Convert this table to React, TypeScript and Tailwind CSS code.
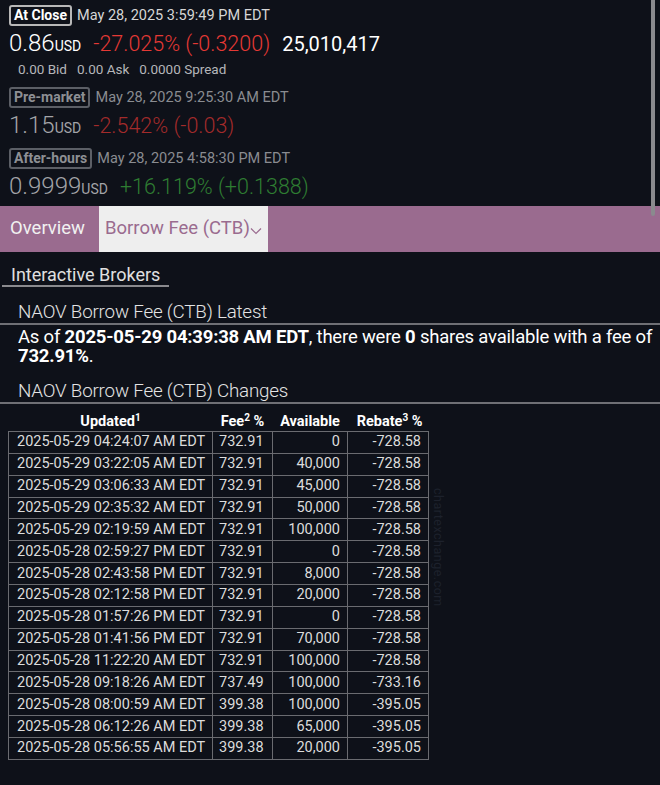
import React from "react";

type Row = [string, string, string, string];

const rows: Row[] = [
  ["2025-05-29 04:24:07 AM EDT", "732.91", "0", "-728.58"],
  ["2025-05-29 03:22:05 AM EDT", "732.91", "40,000", "-728.58"],
  ["2025-05-29 03:06:33 AM EDT", "732.91", "45,000", "-728.58"],
  ["2025-05-29 02:35:32 AM EDT", "732.91", "50,000", "-728.58"],
  ["2025-05-29 02:19:59 AM EDT", "732.91", "100,000", "-728.58"],
  ["2025-05-28 02:59:27 PM EDT", "732.91", "0", "-728.58"],
  ["2025-05-28 02:43:58 PM EDT", "732.91", "8,000", "-728.58"],
  ["2025-05-28 02:12:58 PM EDT", "732.91", "20,000", "-728.58"],
  ["2025-05-28 01:57:26 PM EDT", "732.91", "0", "-728.58"],
  ["2025-05-28 01:41:56 PM EDT", "732.91", "70,000", "-728.58"],
  ["2025-05-28 11:22:20 AM EDT", "732.91", "100,000", "-728.58"],
  ["2025-05-28 09:18:26 AM EDT", "737.49", "100,000", "-733.16"],
  ["2025-05-28 08:00:59 AM EDT", "399.38", "100,000", "-395.05"],
  ["2025-05-28 06:12:26 AM EDT", "399.38", "65,000", "-395.05"],
  ["2025-05-28 05:56:55 AM EDT", "399.38", "20,000", "-395.05"],
];

function Badge({ label, dim }: { label: string; dim?: boolean }) {
  return (
    <span
      className={`inline-block rounded-[3px] border-2 px-[3px] text-[14px] leading-[17px] font-bold ${
        dim ? "border-[#5c5f66] text-[#8d8f94]" : "border-[#b8b8b8] text-white"
      }`}
    >
      {label}
    </span>
  );
}

function Session({
  label,
  date,
  price,
  change,
  changeCls,
  dim,
  extra,
}: {
  label: string;
  date: string;
  price: string;
  change: string;
  changeCls: string;
  dim?: boolean;
  extra?: string;
}) {
  return (
    <div>
      <div className="flex h-[22px] items-center gap-[5px] pl-[9px]">
        <Badge label={label} dim={dim} />
        <span className={`text-[14.5px] leading-[21px] ${dim ? "text-[#8a8c91]" : "text-[#d6d6d6]"}`}>{date}</span>
      </div>
      <div className="flex h-[35px] items-baseline pl-[9px] leading-[35px]">
        <span className={`text-[24px] font-light ${dim ? "text-[#a3a4a8]" : "text-white"}`}>{price}</span>
        <span className={`text-[14px] ${dim ? "text-[#a3a4a8]" : "text-white"}`}>USD</span>
        <span className={`ml-[12px] text-[21.5px] font-light ${changeCls}`}>{change}</span>
        {extra && <span className="ml-[12px] text-[20px] text-white">{extra}</span>}
      </div>
    </div>
  );
}

export default function App() {
  return (
    <div className="relative min-h-[785px] bg-[#0e1119] font-['Roboto',sans-serif] text-white">
      {/* quote header */}
      <div className="flex h-[206px] flex-col overflow-hidden pt-[4px]">
        <div>
          <Session
            label="At Close"
            date="May 28, 2025 3:59:49 PM EDT"
            price="0.86"
            change="-27.025% (-0.3200)"
            changeCls="text-[#e53935]"
            extra="25,010,417"
          />
          <div className="-mt-[1px] flex gap-[10px] pl-[18px] text-[13.5px] leading-[18px] text-[#b5b6b9]">
            <span>0.00 Bid</span>
            <span>0.00 Ask</span>
            <span>0.0000 Spread</span>
          </div>
        </div>
        <div className="mt-[8px]">
          <Session
            label="Pre-market"
            date="May 28, 2025 9:25:30 AM EDT"
            price="1.15"
            change="-2.542% (-0.03)"
            changeCls="text-[#a32b2b]"
            dim
          />
        </div>
        <div className="mt-[4px]">
          <Session
            label="After-hours"
            date="May 28, 2025 4:58:30 PM EDT"
            price="0.9999"
            change="+16.119% (+0.1388)"
            changeCls="text-[#2e7d32]"
            dim
          />
        </div>
      </div>
      <div className="absolute top-0 left-[651px] h-[216px] w-[4px] rounded-b-[2px] bg-[#8a8a8e]" />

      {/* tabs */}
      <div className="flex h-[46px] items-stretch bg-[#9a6b8f] text-[18.5px]">
        <div className="flex w-[99px] items-center pl-[10px] text-[#f1f1f1]">Overview</div>
        <div className="flex w-[169px] items-center bg-[#eeeeee] pl-[6px] text-[#9a6b8f]">
          Borrow Fee (CTB)
          <svg width="12" height="8" viewBox="0 0 12 8" className="mt-[3px]">
            <path d="M1 1.5l5 5 5-5" fill="none" stroke="#9a6b8f" strokeWidth="1.2" />
          </svg>
        </div>
      </div>

      <div className="pt-[12px]">
        <span className="ml-[2px] inline-block border-b-2 border-[#8a8a8e] px-[9px] text-[18px] leading-[20px] text-[#e0e0e0]">
          Interactive Brokers
        </span>
      </div>

      <div className="mt-[13px] border-b-2 border-[#6f7075] pl-[18px] text-[18.8px] leading-[22px] font-light tracking-[-0.2px] text-[#e4e4e4]">
        NAOV Borrow Fee (CTB) Latest
      </div>
      <div className="pt-[3px] pl-[18px] text-[18.5px] leading-[19px] tracking-[-0.2px] text-white">
        As of <b>2025-05-29 04:39:38 AM EDT</b>, there were <b>0</b> shares available with a fee of{" "}
        <b>732.91%</b>.
      </div>
      <div className="mt-[14px] border-b-2 border-[#6f7075] pl-[18px] text-[18.8px] leading-[22px] font-light tracking-[-0.2px] text-[#e4e4e4]">
        NAOV Borrow Fee (CTB) Changes
      </div>

      {/* table */}
      <div className="relative pt-[9px] pl-[8px]">
        <table className="border-collapse">
          <thead>
            <tr className="h-[18px] text-[14.5px] leading-[18px] text-white">
              <th className="w-[204px] text-center font-bold">
                Updated<sup className="text-[10px]">1</sup>
              </th>
              <th className="w-[60px] text-center font-bold">
                Fee<sup className="text-[10px]">2</sup> %
              </th>
              <th className="w-[75px] text-center font-bold">Available</th>
              <th className="w-[81px] pr-[6px] text-right font-bold">
                Rebate<sup className="text-[10px]">3</sup> %
              </th>
            </tr>
          </thead>
          <tbody className="border border-[#6a6b70] text-[14.5px] text-[#dcdcdc]">
            {rows.map((r) => (
              <tr key={r[0]} className="h-[21.87px] leading-[20px]">
                <td className="border border-[#6a6b70] pl-[8px]">{r[0]}</td>
                <td className="border border-[#6a6b70] pl-[6px]">{r[1]}</td>
                <td className="border border-[#6a6b70] pr-[7px] text-right">{r[2]}</td>
                <td className="border border-[#6a6b70] pr-[7px] text-right">{r[3]}</td>
              </tr>
            ))}
          </tbody>
        </table>
        <div className="absolute top-[84px] left-[428px] origin-top-left translate-x-[19px] rotate-90 text-[12.5px] tracking-[0.5px] text-[#1d212c]">
          chartexchange.com
        </div>
      </div>
    </div>
  );
}
